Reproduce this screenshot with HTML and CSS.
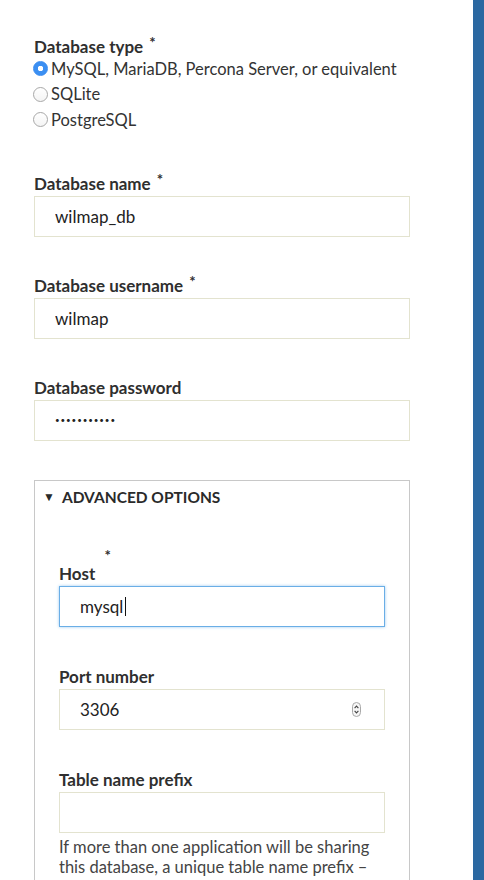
FILE: index.html
```html
<!DOCTYPE html>
<html lang="en">
<head>
<meta charset="utf-8">
<title>Database configuration</title>
<link rel="stylesheet" href="styles.css">
</head>
<body>
<div class="page">
  <main class="form">
    <fieldset class="field radios">
      <legend class="label">Database type <span class="req">*</span></legend>
      <label class="radio"><input type="radio" name="driver" checked><span>MySQL, MariaDB, Percona Server, or equivalent</span></label>
      <label class="radio"><input type="radio" name="driver"><span>SQLite</span></label>
      <label class="radio"><input type="radio" name="driver"><span>PostgreSQL</span></label>
    </fieldset>

    <div class="field">
      <label class="label">Database name <span class="req">*</span></label>
      <input class="text" type="text" value="wilmap_db">
    </div>

    <div class="field">
      <label class="label">Database username <span class="req">*</span></label>
      <input class="text" type="text" value="wilmap">
    </div>

    <div class="field">
      <label class="label">Database password</label>
      <input class="text pass" type="password" value="wilmapwilma">
    </div>

    <details class="advanced" open>
      <summary class="summary"><span class="tri">&#9660;</span>ADVANCED OPTIONS</summary>
      <div class="adv-body">
        <div class="field">
          <label class="label host-label">Host <span class="req high">*</span></label>
          <div class="wrap">
            <input class="text focus" type="text" value="mysql">
            <span class="caret"></span>
          </div>
        </div>
        <div class="field">
          <label class="label">Port number</label>
          <div class="wrap">
            <input class="text" type="text" value="3306">
            <svg class="spin" width="9" height="15" viewBox="0 0 9 15"><rect x="0.5" y="0.5" width="8" height="14" rx="4" fill="#f6f6f6" stroke="#a9a9a9"/><path d="M2.6 6.2 4.5 4.1 6.4 6.2" fill="none" stroke="#444" stroke-width="1.1"/><path d="M2.6 8.8 4.5 10.9 6.4 8.8" fill="none" stroke="#444" stroke-width="1.1"/></svg>
          </div>
        </div>
        <div class="field">
          <label class="label">Table name prefix</label>
          <input class="text" type="text" value="">
          <p class="desc">If more than one application will be sharing this database, a unique table name prefix – such as <em>drupal_</em> – will prevent collisions.</p>
        </div>
      </div>
    </details>
  </main>
  <aside class="bar"></aside>
</div>
</body>
</html>
```
FILE: styles.css
```css
* { box-sizing: border-box; }
html, body { margin: 0; padding: 0; background: #fff; }
body {
  font-family: "Lato", "Open Sans", sans-serif;
  color: #333;
  font-size: 16px;
}
.page {
  display: grid;
  grid-template-columns: 1fr 11px;
  height: 880px;
  overflow: hidden;
}
.bar { background: #2b68a1; }
.form {
  padding: 37px 63px 0 34px;
  display: flex;
  flex-direction: column;
}
.field {
  margin: 0 0 39px;
  border: 0;
  padding: 0;
  display: flex;
  flex-direction: column;
}
.radios { margin-bottom: 41px; min-width: 0; }
.radios .label { margin-bottom: -1px; }
.label {
  font-weight: 700;
  font-size: 17px;
  line-height: 20px;
  color: #2f2f2f;
  padding: 0;
  margin-bottom: 2px;
  display: block;
}
.req {
  font-size: 15px;
  vertical-align: 5px;
  line-height: 0;
  margin-left: 2px;
}
.radio {
  display: flex;
  align-items: center;
  height: 25.5px;
  font-size: 16.5px;
  color: #333;
}
.radio input {
  appearance: none;
  -webkit-appearance: none;
  width: 15px;
  height: 15px;
  margin: 0 3px 0 -1px;
  border-radius: 50%;
  border: 1px solid #a8a8a8;
  background: linear-gradient(#fff, #f4f4f4);
  flex: none;
}
.radio input:checked {
  border-color: #3a8cf0;
  background: radial-gradient(circle, #fff 0 2.5px, #3b8ff2 3px);
}
.text {
  width: 100%;
  height: 41px;
  border: 1px solid #e3e3cf;
  border-radius: 0;
  padding: 0 20px;
  font-family: inherit;
  font-size: 17px;
  color: #222;
  background: #fff;
  outline: none;
}
.pass { font-size: 8px; letter-spacing: 0.9px; }
.advanced {
  border: 1px solid #c8c8c8;
  padding: 0;
  margin: 0;
}
.summary {
  list-style: none;
  font-weight: 700;
  font-size: 15.5px;
  line-height: 18px;
  padding: 7px 0 0 8px;
  color: #2a2a2a;
  display: flex;
  align-items: center;
}
.summary::-webkit-details-marker { display: none; }
.tri { font-size: 12px; margin-right: 7px; }
.adv-body { padding: 49px 24px 0 24px; }
.adv-body .field { margin-bottom: 40px; }
.req.high { vertical-align: 19px; margin-left: 5px; }
.wrap { position: relative; }
.focus {
  border-color: #6aaee6;
  box-shadow: 0 0 3px #9fcbf0;
}
.caret {
  position: absolute;
  left: 66px;
  top: 11px;
  width: 1px;
  height: 19px;
  background: #111;
}
.spin {
  position: absolute;
  right: 24px;
  top: 13px;
}
.desc {
  margin: 4px 0 0;
  font-size: 16.5px;
  line-height: 20px;
  color: #444;
}
```
